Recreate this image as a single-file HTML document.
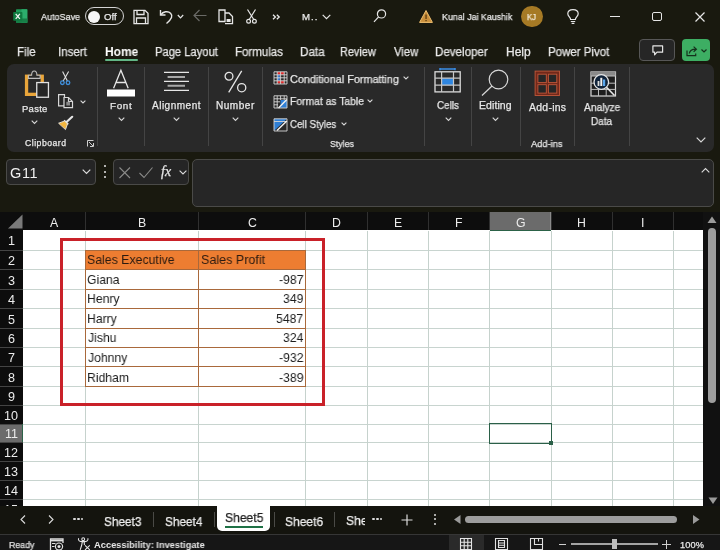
<!DOCTYPE html>
<html><head><meta charset="utf-8"><style>
html,body{margin:0;padding:0;width:720px;height:550px;overflow:hidden;background:#19190f;}
body{position:relative;font-family:"Liberation Sans",sans-serif;}
.t{position:absolute;white-space:nowrap;line-height:20px;height:20px;-webkit-text-stroke:0.25px currentColor;will-change:transform;}
.r{position:absolute;box-sizing:border-box;}
svg.r{overflow:visible}
</style></head><body>
<!-- title bar -->
<svg class="r" style="left:13px;top:8.5px" width="15" height="14" viewBox="0 0 15 14">
  <rect x="3" y="0.3" width="11.3" height="13.5" rx="0.8" fill="#1f9a5a"/>
  <rect x="8.5" y="0.3" width="5.8" height="13.5" fill="#2cae6c"/>
  <rect x="3" y="9.5" width="11.3" height="4.3" fill="#177f47"/>
  <rect x="0.2" y="2.9" width="9.2" height="8.8" rx="0.8" fill="#107a40"/>
  <path d="M2.7 4.8 L6.9 9.8 M6.9 4.8 L2.7 9.8" stroke="#f0f0f0" stroke-width="1.3"/>
</svg>
<div class="r" style="left:85px;top:7.2px;width:38.8px;height:17.5px;border:1.5px solid #d4d4d4;border-radius:9px;"></div>
<div class="r" style="left:87.8px;top:10.6px;width:12.3px;height:12.3px;border-radius:50%;background:#f6f6f6;"></div>
<!-- save -->
<svg class="r" style="left:133px;top:8.5px" width="16" height="16" viewBox="0 0 16 16" fill="none" stroke="#e6e6e6" stroke-width="1.3">
  <path d="M1 1.3 H12 L15 4.3 V14.7 H1 Z"/>
  <path d="M4 1.3 V5.5 H11 V1.3"/>
  <path d="M3.5 14.7 V9 H12.5 V14.7"/>
</svg>
<!-- undo -->
<svg class="r" style="left:159px;top:8.5px" width="16" height="16" viewBox="0 0 16 16" fill="none" stroke="#e6e6e6" stroke-width="1.4">
  <path d="M1.5 1 V6 H6.5"/>
  <path d="M1.8 5.8 C4 2.5 9 1.6 11.6 4.2 C14 6.6 13 10 7.5 14.5"/>
</svg>
<svg class="r" style="left:177px;top:13.5px" width="7" height="5" fill="none" stroke="#e6e6e6" stroke-width="1.2"><path d="M0.8 1 L3.5 3.8 L6.2 1"/></svg>
<!-- back arrow dim -->
<svg class="r" style="left:192.5px;top:9px" width="14" height="13" fill="none" stroke="#6a6a66" stroke-width="1.2"><path d="M13.5 6.5 H1 M6.5 1 L1 6.5 L6.5 12"/></svg>
<!-- copy-like icon -->
<svg class="r" style="left:218px;top:8.5px" width="16" height="16" viewBox="0 0 16 16" fill="none" stroke="#e6e6e6" stroke-width="1.3">
  <path d="M1 1 H7 V12.5 H1 Z"/>
  <path d="M7 4 H11 L14.5 7.5 V14.7 H7"/>
  <rect x="8.6" y="10" width="4" height="3" fill="#e6e6e6" stroke="none"/>
</svg>
<!-- scissors -->
<svg class="r" style="left:245.5px;top:9px" width="11" height="15" viewBox="0 0 11 15" fill="none" stroke="#e6e6e6" stroke-width="1.2">
  <path d="M1.5 0.5 L7.6 10.2 M9.5 0.5 L3.4 10.2"/>
  <circle cx="2.6" cy="12.2" r="1.9"/><circle cx="8.4" cy="12.2" r="1.9"/>
</svg>
<svg class="r" style="left:321.5px;top:13.5px" width="9" height="6" fill="none" stroke="#e6e6e6" stroke-width="1.2"><path d="M0.7 0.8 L4.5 4.6 L8.3 0.8"/></svg>
<!-- search -->
<svg class="r" style="left:373px;top:9px" width="14" height="14" fill="none" stroke="#e6e6e6" stroke-width="1.2"><circle cx="8.5" cy="4.9" r="4.1"/><path d="M5.6 7.8 L1 12.8"/></svg>
<!-- warning -->
<svg class="r" style="left:419px;top:9.5px" width="14" height="13" viewBox="0 0 14 13">
  <path d="M7 0.5 L13.4 12.4 H0.6 Z" fill="#c98f3c" stroke="#f0c070" stroke-width="1" stroke-linejoin="round"/>
  <rect x="6.4" y="4.5" width="1.3" height="4.5" fill="#5a3a10"/><rect x="6.4" y="10" width="1.3" height="1.2" fill="#5a3a10"/>
</svg>
<div class="r" style="left:521.3px;top:5.8px;width:21.5px;height:21.5px;border-radius:50%;background:#a67a25;"></div>
<!-- lightbulb -->
<svg class="r" style="left:567px;top:8.5px" width="12" height="15" viewBox="0 0 12 15" fill="none" stroke="#e6e6e6" stroke-width="1.2">
  <path d="M3.6 10.5 C3.6 8.5 0.8 7.3 0.8 4.8 C0.8 2.2 3 0.6 6 0.6 C9 0.6 11.2 2.2 11.2 4.8 C11.2 7.3 8.4 8.5 8.4 10.5 Z"/>
  <path d="M3.8 12.5 H8.2 M4.6 14.3 H7.4"/>
</svg>
<!-- window controls -->
<div class="r" style="left:610px;top:15.5px;width:10px;height:1.2px;background:#e6e6e6;"></div>
<div class="r" style="left:652.3px;top:11.6px;width:9.8px;height:9.4px;border:1.2px solid #e6e6e6;border-radius:2px;"></div>
<svg class="r" style="left:695px;top:11.5px" width="10" height="10" fill="none" stroke="#e6e6e6" stroke-width="1.2"><path d="M0.5 0.5 L9.5 9.5 M9.5 0.5 L0.5 9.5"/></svg>

<!-- tabs -->
<div class="r" style="left:105px;top:58.8px;width:32.5px;height:2.2px;background:#62b686;border-radius:1px;"></div>
<div class="r" style="left:638.5px;top:39.3px;width:36.5px;height:21.6px;border:1.1px solid #575757;border-radius:4px;background:#262626;"></div>
<svg class="r" style="left:651.5px;top:44.5px" width="12" height="11" fill="none" stroke="#e6e6e6" stroke-width="1.2"><path d="M0.9 0.9 H10.6 V7.2 H5 L2.6 9.8 V7.2 H0.9 Z" stroke-linejoin="round"/></svg>
<div class="r" style="left:682px;top:39.3px;width:28px;height:21.6px;border-radius:4px;background:#3dae63;"></div>
<svg class="r" style="left:685.5px;top:44.5px" width="12" height="12" fill="none" stroke="#15301c" stroke-width="1.2"><path d="M1 5.5 V10.7 H9.7 V8.6"/><path d="M3.3 8.5 C3.8 5.6 5.6 4.2 9.6 4.2 M7.6 1.6 L10.4 4.2 L7.6 6.8"/></svg>
<svg class="r" style="left:701px;top:48.8px" width="6" height="4" fill="none" stroke="#15301c" stroke-width="1.2"><path d="M0.5 0.5 L3 3 L5.5 0.5"/></svg>
<svg class="r" style="left:272px;top:13.5px" width="9" height="6" fill="none" stroke="#ececec" stroke-width="1.3"><path d="M1 0.8 L3.4 3 L1 5.2 M4.8 0.8 L7.2 3 L4.8 5.2"/></svg>

<!-- ribbon panel -->
<div class="r" style="left:6.5px;top:63.6px;width:707px;height:88px;background:#292929;border-radius:7px;"></div>
<!-- separators -->
<div class="r" style="left:97px;top:67px;width:1px;height:79px;background:#444;"></div>
<div class="r" style="left:144.3px;top:67px;width:1px;height:79px;background:#444;"></div>
<div class="r" style="left:208px;top:67px;width:1px;height:79px;background:#444;"></div>
<div class="r" style="left:262.3px;top:67px;width:1px;height:79px;background:#444;"></div>
<div class="r" style="left:423.5px;top:67px;width:1px;height:79px;background:#444;"></div>
<div class="r" style="left:471.3px;top:67px;width:1px;height:79px;background:#444;"></div>
<div class="r" style="left:519.5px;top:67px;width:1px;height:79px;background:#444;"></div>
<div class="r" style="left:574.3px;top:67px;width:1px;height:79px;background:#444;"></div>
<div class="r" style="left:628.7px;top:67px;width:1px;height:79px;background:#444;"></div>

<!-- Clipboard: paste icon -->
<svg class="r" style="left:24px;top:70px" width="27" height="29" viewBox="0 0 27 29" fill="none">
  <rect x="2.55" y="6.25" width="15.7" height="18.1" stroke="#e9a53a" stroke-width="3.3"/>
  <path d="M4.4 8.4 V5.3 H7.6 C7.6 2.3 8.6 1 10.25 1 C11.9 1 12.9 2.3 12.9 5.3 H16.1 V8.4 Z" fill="#2a2a2a" stroke="#bdbdbd" stroke-width="1.1"/>
  <rect x="12.75" y="12.55" width="11.7" height="14.7" fill="#262626" stroke="#e0e0e0" stroke-width="1.3"/>
</svg>
<svg class="r" style="left:31px;top:120px" width="7" height="5" fill="none" stroke="#d8d8d8" stroke-width="1.1"><path d="M0.7 0.7 L3.5 3.5 L6.3 0.7"/></svg>
<!-- scissors -->
<svg class="r" style="left:58px;top:70px" width="14" height="16" viewBox="0 0 14 16" fill="none">
  <path d="M4.6 1.6 L9.4 11 M10.6 1.6 L5.2 11" stroke="#e0e0e0" stroke-width="1.1"/>
  <circle cx="4.4" cy="12.7" r="1.8" stroke="#3f8fdc" stroke-width="1.3"/><circle cx="10" cy="12.7" r="1.8" stroke="#3f8fdc" stroke-width="1.3"/>
</svg>
<!-- copy -->
<svg class="r" style="left:57px;top:93px" width="18" height="16" viewBox="0 0 18 16" fill="none" stroke="#d8d8d8" stroke-width="1.2">
  <path d="M1.6 1.6 H7.5 V12.8 H1.6 Z"/>
  <path d="M7 4.5 H11.5 L15.5 8.5 V14.7 H7 Z" fill="#262626"/>
  <path d="M11.5 4.5 V8.5 H15.5"/>
  <rect x="9.3" y="8.8" width="3.7" height="3.7" fill="#8a8a8a" stroke="none"/>
</svg>
<svg class="r" style="left:79.5px;top:99.5px" width="6" height="4" fill="none" stroke="#d8d8d8" stroke-width="1.1"><path d="M0.6 0.6 L3 3 L5.4 0.6"/></svg>
<!-- format painter -->
<svg class="r" style="left:57px;top:115px" width="17" height="16" viewBox="0 0 17 16" fill="none">
  <path d="M9.5 7 L15.2 1.8" stroke="#e6e6e6" stroke-width="2.2" stroke-linecap="round"/>
  <path d="M7.2 5.2 L11.3 9.3" stroke="#e6e6e6" stroke-width="1.4"/>
  <path d="M7.6 6 L10.5 8.9 L8.5 14.6 L1.6 8.2 Z" fill="#f2b640" stroke="#e6e6e6" stroke-width="0.9"/>
  <path d="M4.5 10.6 L8.5 14.6 L1.6 8.2 Z" fill="#c98a2a"/>
</svg>
<svg class="r" style="left:87px;top:140px" width="7" height="7" fill="none" stroke="#d0d0d0" stroke-width="1"><path d="M0.5 6.5 V0.5 H6.5 M2 2 L6 6 M3 6.5 H6.5 V3"/></svg>

<!-- Font -->
<svg class="r" style="left:107px;top:69.5px" width="28" height="27" viewBox="0 0 28 27" fill="none">
  <path d="M6.6 18.3 L13.9 0.3 L21.2 18.3 M9.3 12.5 H18.5" stroke="#e6e6e6" stroke-width="1.3"/>
  <rect x="0" y="19.5" width="28" height="7" fill="#ffffff"/>
</svg>
<svg class="r" style="left:117.5px;top:117px" width="7" height="5" fill="none" stroke="#d8d8d8" stroke-width="1.1"><path d="M0.7 0.7 L3.5 3.5 L6.3 0.7"/></svg>

<!-- Alignment -->
<svg class="r" style="left:163px;top:70px" width="28" height="23" fill="none">
  <path d="M1 2.4 H26 M1 11.3 H26 M1 20.3 H26" stroke="#e6e6e6" stroke-width="1.3"/>
  <path d="M4.6 7 H22 M4.6 15.8 H22" stroke="#a8a8a8" stroke-width="2"/>
</svg>
<svg class="r" style="left:172.5px;top:117px" width="7" height="5" fill="none" stroke="#d8d8d8" stroke-width="1.1"><path d="M0.7 0.7 L3.5 3.5 L6.3 0.7"/></svg>

<!-- Number -->
<svg class="r" style="left:222px;top:69px" width="26" height="26" fill="none" stroke="#e6e6e6" stroke-width="1.3">
  <circle cx="7" cy="7.2" r="3.9"/><circle cx="19.7" cy="18.7" r="4.1"/><path d="M19.7 1.9 L6.7 23.3"/>
</svg>
<svg class="r" style="left:231.5px;top:117px" width="7" height="5" fill="none" stroke="#d8d8d8" stroke-width="1.1"><path d="M0.7 0.7 L3.5 3.5 L6.3 0.7"/></svg>

<!-- Styles -->
<svg class="r" style="left:272.5px;top:71px" width="15" height="14" viewBox="0 0 15 14" fill="none">
  <rect x="4.2" y="1" width="7" height="2.6" fill="#e02828"/>
  <rect x="4.2" y="9.8" width="7" height="2.6" fill="#e02828"/>
  <rect x="4.2" y="3.8" width="2.6" height="5.8" fill="#3a7fd6"/>
  <path d="M1 0.8 H14 V13 H1 Z M1 3.8 H14 M1 6.8 H14 M1 9.8 H14 M4.2 0.8 V13 M7.6 0.8 V13 M11.2 0.8 V13" stroke="#d6d6d6" stroke-width="0.9"/>
</svg>
<svg class="r" style="left:402.5px;top:75.5px" width="6" height="4" fill="none" stroke="#d8d8d8" stroke-width="1.1"><path d="M0.6 0.6 L3 3 L5.4 0.6"/></svg>
<svg class="r" style="left:272.5px;top:94.5px" width="15" height="14" viewBox="0 0 15 14" fill="none">
  <path d="M6.5 12.8 L14 5 V12.8 Z" fill="#2f7fd6"/>
  <rect x="7.5" y="5" width="6.5" height="7.8" fill="#2f7fd6"/>
  <path d="M1 0.8 H14 V13 H1 Z M1 3.8 H14 M1 6.8 H7 M1 9.8 H5 M4.2 0.8 V13 M7.6 0.8 V5 M11.2 0.8 V5" stroke="#d6d6d6" stroke-width="0.9"/>
  <path d="M5.5 13 L13.8 4.5" stroke="#f2f2f2" stroke-width="1.4"/>
</svg>
<svg class="r" style="left:367px;top:98.5px" width="6" height="4" fill="none" stroke="#d8d8d8" stroke-width="1.1"><path d="M0.6 0.6 L3 3 L5.4 0.6"/></svg>
<svg class="r" style="left:272.5px;top:117.5px" width="15" height="14" viewBox="0 0 15 14" fill="none">
  <path d="M1 0.8 H14 L1 13 Z" fill="#2f7fd6"/>
  <path d="M1 0.8 H14 V13 H1 Z M1 3.5 H14" stroke="#d6d6d6" stroke-width="0.9"/>
  <path d="M4 12.5 L13.8 3" stroke="#f2f2f2" stroke-width="1.4"/>
</svg>
<svg class="r" style="left:340.5px;top:121.5px" width="6" height="4" fill="none" stroke="#d8d8d8" stroke-width="1.1"><path d="M0.6 0.6 L3 3 L5.4 0.6"/></svg>

<!-- Cells -->
<svg class="r" style="left:434px;top:67px" width="27" height="26" viewBox="0 0 27 26" fill="none">
  <path d="M6 2.1 H21 M6 1 V3.2 M21 1 V3.2" stroke="#3a8ee6" stroke-width="1.5"/>
  <rect x="7.6" y="11.2" width="11.9" height="7" fill="#2f86e0"/>
  <rect x="1" y="4.8" width="25.2" height="20.1" stroke="#dcdcdc" stroke-width="1.3"/>
  <path d="M1 11.2 H26.2 M1 18.2 H26.2 M7.6 4.8 V24.9 M19.5 4.8 V24.9" stroke="#c8c8c8" stroke-width="1.2"/>
</svg>
<svg class="r" style="left:444.5px;top:117px" width="7" height="5" fill="none" stroke="#d8d8d8" stroke-width="1.1"><path d="M0.7 0.7 L3.5 3.5 L6.3 0.7"/></svg>

<!-- Editing -->
<svg class="r" style="left:481px;top:68.5px" width="28" height="27" fill="none" stroke="#d8d8d8" stroke-width="1.2">
  <circle cx="17.5" cy="10.5" r="9.3"/><path d="M11 17 L1 26.5"/>
</svg>
<svg class="r" style="left:491.5px;top:117px" width="7" height="5" fill="none" stroke="#d8d8d8" stroke-width="1.1"><path d="M0.7 0.7 L3.5 3.5 L6.3 0.7"/></svg>

<!-- Add-ins -->
<svg class="r" style="left:534px;top:70px" width="27" height="27" viewBox="0 0 27 27">
  <rect x="1.1" y="1.1" width="24.4" height="24.4" fill="#72281a" stroke="#c0583a" stroke-width="0.9"/>
  <rect x="3.9" y="4.2" width="8.4" height="8.4" fill="#262626" stroke="#c0583a" stroke-width="0.9"/>
  <rect x="14.4" y="4.2" width="8.4" height="8.4" fill="#262626" stroke="#c0583a" stroke-width="0.9"/>
  <rect x="3.9" y="14.7" width="8.4" height="8.4" fill="#262626" stroke="#c0583a" stroke-width="0.9"/>
  <rect x="14.4" y="14.7" width="8.4" height="8.4" fill="#262626" stroke="#c0583a" stroke-width="0.9"/>
</svg>

<!-- Analyze Data -->
<svg class="r" style="left:589.5px;top:70.5px" width="27" height="27" viewBox="0 0 27 27" fill="none">
  <rect x="1" y="1" width="24.5" height="24" fill="#1e1e1e" stroke="#d8d8d8" stroke-width="1.2"/>
  <rect x="1" y="1" width="24.5" height="4" fill="#8a8a8a"/>
  <path d="M1 5 H25.5 M1 12.2 H25.5 M1 18.4 H25.5 M8.5 5 V25 M16.2 5 V25" stroke="#bdbdbd" stroke-width="1"/>
  <circle cx="11.3" cy="11" r="7.3" fill="#10233a" stroke="#e6e6e6" stroke-width="1.3"/>
  <path d="M16.5 16.3 L24.5 24.5" stroke="#e6e6e6" stroke-width="1.6"/>
  <rect x="7.6" y="10" width="1.8" height="5" fill="#dcdcdc"/><rect x="10.3" y="6.8" width="2" height="8.2" fill="#f0f0f0"/><rect x="13" y="8.5" width="2.2" height="6.5" fill="#5aa8ee"/>
</svg>
<svg class="r" style="left:695.5px;top:137px" width="10" height="6" fill="none" stroke="#d8d8d8" stroke-width="1.2"><path d="M0.7 0.7 L5 5 L9.3 0.7"/></svg>

<!-- formula bar -->
<div class="r" style="left:6px;top:159.2px;width:90px;height:25.5px;border:1px solid #4a4a48;border-radius:4px;background:#252525;"></div>
<svg class="r" style="left:82px;top:169px" width="9" height="6" fill="none" stroke="#dcdcdc" stroke-width="1.2"><path d="M0.7 0.7 L4.5 4.5 L8.3 0.7"/></svg>
<div class="r" style="left:103.5px;top:165px;width:2px;height:2px;background:#e6e6e6;border-radius:1px;"></div>
<div class="r" style="left:103.5px;top:170.5px;width:2px;height:2px;background:#e6e6e6;border-radius:1px;"></div>
<div class="r" style="left:103.5px;top:176px;width:2px;height:2px;background:#e6e6e6;border-radius:1px;"></div>
<div class="r" style="left:113.3px;top:159.2px;width:75.6px;height:25.5px;border:1px solid #4a4a48;border-radius:4px;background:#252525;"></div>
<svg class="r" style="left:119px;top:166.5px" width="12" height="12" fill="none" stroke="#8a8a88" stroke-width="1.1"><path d="M0.5 0.5 L11 11 M11 0.5 L0.5 11"/></svg>
<svg class="r" style="left:139px;top:166.5px" width="14" height="11" fill="none" stroke="#8a8a88" stroke-width="1.1"><path d="M0.5 6 L5 10.5 L13.5 0.5"/></svg>
<svg class="r" style="left:179px;top:169.5px" width="8" height="5" fill="none" stroke="#dcdcdc" stroke-width="1.1"><path d="M0.6 0.6 L4 4 L7.4 0.6"/></svg>
<div class="r" style="left:192px;top:159.2px;width:522px;height:47.5px;border:1px solid #4a4a48;border-radius:5px;background:#262626;"></div>
<svg class="r" style="left:700.5px;top:167px" width="9" height="6" fill="none" stroke="#dcdcdc" stroke-width="1.1"><path d="M0.7 5.3 L4.5 1.5 L8.3 5.3"/></svg>
<div style="position:absolute;left:158px;top:162px;width:20px;height:22px;"><div class="t" style="left:2.5px;top:0px;font-size:14px;color:#e6e6e6;font-family:'Liberation Serif',serif;font-style:italic;">fx</div></div>

<div style="position:absolute;left:0;top:0;width:720px;height:505.9px;overflow:hidden"><div class="r" style="left:0px;top:211.9px;width:720px;height:294.0px;background:#0d0d0d;"></div>
<div class="r" style="left:23.4px;top:230.4px;width:679.3000000000001px;height:275.5px;background:#ffffff;"></div>
<div class="r" style="left:23.4px;top:249.6px;width:679.3000000000001px;height:1px;background:#c8d4cf;"></div>
<div class="r" style="left:23.4px;top:269.0px;width:679.3000000000001px;height:1px;background:#c8d4cf;"></div>
<div class="r" style="left:23.4px;top:288.7px;width:679.3000000000001px;height:1px;background:#c8d4cf;"></div>
<div class="r" style="left:23.4px;top:307.9px;width:679.3000000000001px;height:1px;background:#c8d4cf;"></div>
<div class="r" style="left:23.4px;top:327.8px;width:679.3000000000001px;height:1px;background:#c8d4cf;"></div>
<div class="r" style="left:23.4px;top:346.9px;width:679.3000000000001px;height:1px;background:#c8d4cf;"></div>
<div class="r" style="left:23.4px;top:366.1px;width:679.3000000000001px;height:1px;background:#c8d4cf;"></div>
<div class="r" style="left:23.4px;top:386.0px;width:679.3000000000001px;height:1px;background:#c8d4cf;"></div>
<div class="r" style="left:23.4px;top:404.7px;width:679.3000000000001px;height:1px;background:#c8d4cf;"></div>
<div class="r" style="left:23.4px;top:423.8px;width:679.3000000000001px;height:1px;background:#c8d4cf;"></div>
<div class="r" style="left:23.4px;top:442.3px;width:679.3000000000001px;height:1px;background:#c8d4cf;"></div>
<div class="r" style="left:23.4px;top:460.7px;width:679.3000000000001px;height:1px;background:#c8d4cf;"></div>
<div class="r" style="left:23.4px;top:479.9px;width:679.3000000000001px;height:1px;background:#c8d4cf;"></div>
<div class="r" style="left:23.4px;top:499.0px;width:679.3000000000001px;height:1px;background:#c8d4cf;"></div>
<div class="r" style="left:85.2px;top:230.8px;width:1px;height:275.09999999999997px;background:#c6d2cd;"></div>
<div class="r" style="left:198.1px;top:230.8px;width:1px;height:275.09999999999997px;background:#c6d2cd;"></div>
<div class="r" style="left:305.3px;top:230.8px;width:1px;height:275.09999999999997px;background:#c6d2cd;"></div>
<div class="r" style="left:367.0px;top:230.8px;width:1px;height:275.09999999999997px;background:#c6d2cd;"></div>
<div class="r" style="left:428.1px;top:230.8px;width:1px;height:275.09999999999997px;background:#c6d2cd;"></div>
<div class="r" style="left:489.0px;top:230.8px;width:1px;height:275.09999999999997px;background:#c6d2cd;"></div>
<div class="r" style="left:550.9px;top:230.8px;width:1px;height:275.09999999999997px;background:#c6d2cd;"></div>
<div class="r" style="left:612.0px;top:230.8px;width:1px;height:275.09999999999997px;background:#c6d2cd;"></div>
<div class="r" style="left:673.2px;top:230.8px;width:1px;height:275.09999999999997px;background:#c6d2cd;"></div>
<div class="r" style="left:85.2px;top:211.9px;width:1px;height:18.5px;background:#303030;"></div>
<div class="r" style="left:198.1px;top:211.9px;width:1px;height:18.5px;background:#303030;"></div>
<div class="r" style="left:305.3px;top:211.9px;width:1px;height:18.5px;background:#303030;"></div>
<div class="r" style="left:367.0px;top:211.9px;width:1px;height:18.5px;background:#303030;"></div>
<div class="r" style="left:428.1px;top:211.9px;width:1px;height:18.5px;background:#303030;"></div>
<div class="r" style="left:490.0px;top:211.9px;width:60.89999999999998px;height:18.5px;background:#6b6b6b;"></div>
<div class="r" style="left:489.5px;top:229.6px;width:61.89999999999998px;height:1px;background:#2c6248;"></div>
<div class="r" style="left:550.4px;top:211.9px;width:1px;height:18px;background:#8a8a8a;"></div>
<div class="r" style="left:489.0px;top:211.9px;width:1px;height:18.5px;background:#303030;"></div>
<div class="r" style="left:550.9px;top:211.9px;width:1px;height:18.5px;background:#303030;"></div>
<div class="r" style="left:612.0px;top:211.9px;width:1px;height:18.5px;background:#303030;"></div>
<div class="r" style="left:673.2px;top:211.9px;width:1px;height:18.5px;background:#303030;"></div>
<div class="r" style="left:702.7px;top:211.9px;width:1px;height:18.5px;background:#303030;"></div>
<svg class="r" style="left:7px;top:214px" width="16" height="15"><polygon points="15.5,0.5 15.5,14.5 1,14.5" fill="#7a7a7a"/></svg>
<div class="r" style="left:0px;top:249.6px;width:23.4px;height:1px;background:#444444;"></div>
<div class="r" style="left:0px;top:269.0px;width:23.4px;height:1px;background:#444444;"></div>
<div class="r" style="left:0px;top:288.7px;width:23.4px;height:1px;background:#444444;"></div>
<div class="r" style="left:0px;top:307.9px;width:23.4px;height:1px;background:#444444;"></div>
<div class="r" style="left:0px;top:327.8px;width:23.4px;height:1px;background:#444444;"></div>
<div class="r" style="left:0px;top:346.9px;width:23.4px;height:1px;background:#444444;"></div>
<div class="r" style="left:0px;top:366.1px;width:23.4px;height:1px;background:#444444;"></div>
<div class="r" style="left:0px;top:386.0px;width:23.4px;height:1px;background:#444444;"></div>
<div class="r" style="left:0px;top:404.7px;width:23.4px;height:1px;background:#444444;"></div>
<div class="r" style="left:0px;top:423.8px;width:23.4px;height:1px;background:#444444;"></div>
<div class="r" style="left:0px;top:424.8px;width:23.4px;height:17.5px;background:#6b6b6b;"></div>
<div class="r" style="left:22.4px;top:424.3px;width:1px;height:18.5px;background:#2c6248;"></div>
<div class="r" style="left:0px;top:442.3px;width:23.4px;height:1px;background:#444444;"></div>
<div class="r" style="left:0px;top:460.7px;width:23.4px;height:1px;background:#444444;"></div>
<div class="r" style="left:0px;top:479.9px;width:23.4px;height:1px;background:#444444;"></div>
<div class="r" style="left:0px;top:499.0px;width:23.4px;height:1px;background:#444444;"></div>
<div class="r" style="left:0px;top:518.2px;width:23.4px;height:1px;background:#444444;"></div>
<div class="r" style="left:85.7px;top:250.1px;width:220.10000000000002px;height:19.4px;background:#ed7d31;"></div>
<div class="r" style="left:85.1px;top:249.5px;width:221.3px;height:1.2px;background:#a9693b;"></div>
<div class="r" style="left:85.1px;top:268.9px;width:221.3px;height:1.2px;background:#a9693b;"></div>
<div class="r" style="left:85.1px;top:288.6px;width:221.3px;height:1.2px;background:#a9693b;"></div>
<div class="r" style="left:85.1px;top:307.8px;width:221.3px;height:1.2px;background:#a9693b;"></div>
<div class="r" style="left:85.1px;top:327.7px;width:221.3px;height:1.2px;background:#a9693b;"></div>
<div class="r" style="left:85.1px;top:346.8px;width:221.3px;height:1.2px;background:#a9693b;"></div>
<div class="r" style="left:85.1px;top:366.0px;width:221.3px;height:1.2px;background:#a9693b;"></div>
<div class="r" style="left:85.1px;top:385.9px;width:221.3px;height:1.2px;background:#a9693b;"></div>
<div class="r" style="left:85.1px;top:249.5px;width:1.2px;height:137.6px;background:#a9693b;"></div>
<div class="r" style="left:198.0px;top:249.5px;width:1.2px;height:137.6px;background:#a9693b;"></div>
<div class="r" style="left:305.2px;top:249.5px;width:1.2px;height:137.6px;background:#a9693b;"></div>
<div class="t" style="left:50.43px;top:212.54px;font-size:12.29px;color:#ececec;-webkit-text-stroke:0;">A</div>
<div class="t" style="left:137.85px;top:212.54px;font-size:12.29px;color:#ececec;-webkit-text-stroke:0;">B</div>
<div class="t" style="left:247.65px;top:212.54px;font-size:12.29px;color:#ececec;-webkit-text-stroke:0;">C</div>
<div class="t" style="left:331.98px;top:212.54px;font-size:12.29px;color:#ececec;-webkit-text-stroke:0;">D</div>
<div class="t" style="left:393.69px;top:212.54px;font-size:12.29px;color:#ececec;-webkit-text-stroke:0;">E</div>
<div class="t" style="left:454.99px;top:212.54px;font-size:12.29px;color:#ececec;-webkit-text-stroke:0;">F</div>
<div class="t" style="left:515.78px;top:212.54px;font-size:12.29px;color:#ececec;-webkit-text-stroke:0;">G</div>
<div class="t" style="left:577.46px;top:212.54px;font-size:12.29px;color:#ececec;-webkit-text-stroke:0;">H</div>
<div class="t" style="left:641.38px;top:212.54px;font-size:12.29px;color:#ececec;-webkit-text-stroke:0;">I</div>
<div class="t" style="left:7.75px;top:231.44px;font-size:12.57px;color:#ececec;-webkit-text-stroke:0;">1</div>
<div class="t" style="left:7.88px;top:250.84px;font-size:12.57px;color:#ececec;-webkit-text-stroke:0;">2</div>
<div class="t" style="left:7.94px;top:270.54px;font-size:12.57px;color:#ececec;-webkit-text-stroke:0;">3</div>
<div class="t" style="left:7.94px;top:289.74px;font-size:12.57px;color:#ececec;-webkit-text-stroke:0;">4</div>
<div class="t" style="left:7.88px;top:309.64px;font-size:12.57px;color:#ececec;-webkit-text-stroke:0;">5</div>
<div class="t" style="left:7.82px;top:328.74px;font-size:12.57px;color:#ececec;-webkit-text-stroke:0;">6</div>
<div class="t" style="left:7.88px;top:347.94px;font-size:12.57px;color:#ececec;-webkit-text-stroke:0;">7</div>
<div class="t" style="left:7.88px;top:367.84px;font-size:12.57px;color:#ececec;-webkit-text-stroke:0;">8</div>
<div class="t" style="left:7.94px;top:386.54px;font-size:12.57px;color:#ececec;-webkit-text-stroke:0;">9</div>
<div class="t" style="left:4.20px;top:405.64px;font-size:12.57px;color:#ececec;-webkit-text-stroke:0;">10</div>
<div class="t" style="left:4.73px;top:424.14px;font-size:12.57px;color:#ececec;-webkit-text-stroke:0;">11</div>
<div class="t" style="left:4.26px;top:442.54px;font-size:12.57px;color:#ececec;-webkit-text-stroke:0;">12</div>
<div class="t" style="left:4.20px;top:461.74px;font-size:12.57px;color:#ececec;-webkit-text-stroke:0;">13</div>
<div class="t" style="left:4.13px;top:480.84px;font-size:12.57px;color:#ececec;-webkit-text-stroke:0;">14</div>
<div class="t" style="left:4.20px;top:500.04px;font-size:12.57px;color:#ececec;-webkit-text-stroke:0;">15</div>
<div class="t" style="left:87.31px;top:250.46px;font-size:13.69px;color:#2a1a10;transform:scaleX(0.899);transform-origin:0 0;-webkit-text-stroke:0;">Sales Executive</div>
<div class="t" style="left:200.80px;top:250.46px;font-size:13.69px;color:#2a1a10;transform:scaleX(0.916);transform-origin:0 0;-webkit-text-stroke:0;">Sales Profit</div>
<div class="t" style="left:87.19px;top:270.25px;font-size:13.41px;color:#1c1c1c;transform:scaleX(0.910);transform-origin:0 0;-webkit-text-stroke:0;">Giana</div>
<div class="t" style="left:278.94px;top:270.25px;font-size:13.41px;color:#1c1c1c;transform:scaleX(0.910);transform-origin:0 0;-webkit-text-stroke:0;">-987</div>
<div class="t" style="left:86.82px;top:289.45px;font-size:13.41px;color:#1c1c1c;transform:scaleX(0.910);transform-origin:0 0;-webkit-text-stroke:0;">Henry</div>
<div class="t" style="left:283.01px;top:289.45px;font-size:13.41px;color:#1c1c1c;transform:scaleX(0.910);transform-origin:0 0;-webkit-text-stroke:0;">349</div>
<div class="t" style="left:86.82px;top:309.35px;font-size:13.41px;color:#1c1c1c;transform:scaleX(0.910);transform-origin:0 0;-webkit-text-stroke:0;">Harry</div>
<div class="t" style="left:276.22px;top:309.35px;font-size:13.41px;color:#1c1c1c;transform:scaleX(0.910);transform-origin:0 0;-webkit-text-stroke:0;">5487</div>
<div class="t" style="left:87.68px;top:328.45px;font-size:13.41px;color:#1c1c1c;transform:scaleX(0.910);transform-origin:0 0;-webkit-text-stroke:0;">Jishu</div>
<div class="t" style="left:282.76px;top:328.45px;font-size:13.41px;color:#1c1c1c;transform:scaleX(0.910);transform-origin:0 0;-webkit-text-stroke:0;">324</div>
<div class="t" style="left:87.68px;top:347.65px;font-size:13.41px;color:#1c1c1c;transform:scaleX(0.910);transform-origin:0 0;-webkit-text-stroke:0;">Johnny</div>
<div class="t" style="left:278.94px;top:347.65px;font-size:13.41px;color:#1c1c1c;transform:scaleX(0.910);transform-origin:0 0;-webkit-text-stroke:0;">-932</div>
<div class="t" style="left:86.82px;top:367.55px;font-size:13.41px;color:#1c1c1c;transform:scaleX(0.910);transform-origin:0 0;-webkit-text-stroke:0;">Ridham</div>
<div class="t" style="left:278.94px;top:367.55px;font-size:13.41px;color:#1c1c1c;transform:scaleX(0.910);transform-origin:0 0;-webkit-text-stroke:0;">-389</div>
<div class="r" style="left:59.8px;top:238.3px;width:264.8px;height:168px;border:3.1px solid #c92129"></div>
<div class="r" style="left:489.1px;top:422.8px;width:62.9px;height:20.9px;border:1.3px solid #2b6048"></div>
<div class="r" style="left:548.9px;top:440.8px;width:4.2px;height:4px;background:#2b6048;"></div>
<div class="r" style="left:702.7px;top:211.9px;width:17.299999999999955px;height:294.0px;background:#111111;"></div>
<svg class="r" style="left:707px;top:216px" width="10" height="8"><polygon points="5,0.5 9.5,7 0.5,7" fill="#9a9a9a"/></svg>
<div class="r" style="left:708px;top:227.6px;width:7.6px;height:175.7px;background:#9d9d9d;border-radius:4px;"></div>
<svg class="r" style="left:707.5px;top:496.5px" width="10" height="8"><polygon points="0.5,0.5 9.5,0.5 5,7" fill="#9a9a9a"/></svg></div>
<!-- sheet tab bar -->
<div class="r" style="left:0;top:505.9px;width:720px;height:28.3px;background:#14140e;"></div>
<!-- white tab connecting to grid -->
<div class="r" style="left:217.2px;top:505.9px;width:53px;height:25px;background:#ffffff;border-radius:0 0 5px 5px;"></div>
<!-- rounded corners of dark bar adjacent to tab -->
<svg class="r" style="left:211.2px;top:505.9px" width="6" height="6"><path d="M0 6 A6 6 0 0 0 6 0 V6 Z" fill="#14140e"/></svg>
<svg class="r" style="left:0;top:505.9px" width="0" height="0"></svg>
<svg class="r" style="left:270.2px;top:505.9px" width="6" height="6"><path d="M6 6 A6 6 0 0 1 0 0 V6 Z" fill="#14140e"/></svg>
<!-- nav -->
<svg class="r" style="left:19.5px;top:515px" width="6" height="9" fill="none" stroke="#dcdcdc" stroke-width="1.1"><path d="M5 0.5 L1 4.5 L5 8.5"/></svg>
<svg class="r" style="left:48px;top:515px" width="6" height="9" fill="none" stroke="#dcdcdc" stroke-width="1.1"><path d="M1 0.5 L5 4.5 L1 8.5"/></svg>
<div class="r" style="left:73.3px;top:517.8px;width:2.6px;height:2.6px;background:#dcdcdc;border-radius:50%;"></div>
<div class="r" style="left:77.1px;top:517.8px;width:2.6px;height:2.6px;background:#dcdcdc;border-radius:50%;"></div>
<div class="r" style="left:80.9px;top:517.8px;width:2.6px;height:2.6px;background:#dcdcdc;border-radius:50%;"></div>
<div class="r" style="left:152.5px;top:512px;width:1px;height:15px;background:#4a4a46;"></div>
<div class="r" style="left:213.5px;top:512px;width:1px;height:15px;background:#4a4a46;"></div>
<div class="r" style="left:224.8px;top:526.3px;width:38.2px;height:1.8px;background:#1e7145;"></div>
<div class="r" style="left:273.5px;top:512px;width:1px;height:15px;background:#4a4a46;"></div>
<div class="r" style="left:333.5px;top:512px;width:1px;height:15px;background:#4a4a46;"></div>
<div class="r" style="left:372.3px;top:517.8px;width:2.6px;height:2.6px;background:#dcdcdc;border-radius:50%;"></div>
<div class="r" style="left:376.1px;top:517.8px;width:2.6px;height:2.6px;background:#dcdcdc;border-radius:50%;"></div>
<div class="r" style="left:379.9px;top:517.8px;width:2.6px;height:2.6px;background:#dcdcdc;border-radius:50%;"></div>
<svg class="r" style="left:400.5px;top:513.5px" width="12" height="12" fill="none" stroke="#dcdcdc" stroke-width="1.2"><path d="M6 0.5 V11.5 M0.5 6 H11.5"/></svg>
<div class="r" style="left:434px;top:513.5px;width:2.2px;height:2.2px;background:#dcdcdc;border-radius:50%;"></div>
<div class="r" style="left:434px;top:518.3px;width:2.2px;height:2.2px;background:#dcdcdc;border-radius:50%;"></div>
<div class="r" style="left:434px;top:523.1px;width:2.2px;height:2.2px;background:#dcdcdc;border-radius:50%;"></div>
<svg class="r" style="left:453.5px;top:515px" width="7" height="9"><polygon points="6.5,0 6.5,9 0,4.5" fill="#9a9a9a"/></svg>
<div class="r" style="left:465px;top:515.5px;width:211.7px;height:7.5px;background:#9d9d9d;border-radius:4px;"></div>
<svg class="r" style="left:693px;top:515px" width="7" height="9"><polygon points="0,0 0,9 6.5,4.5" fill="#9a9a9a"/></svg>

<!-- status bar -->
<div class="r" style="left:0;top:534px;width:720px;height:1px;background:#363636;"></div>
<div class="r" style="left:0;top:535px;width:720px;height:15px;background:#161616;"></div>
<svg class="r" style="left:49px;top:538px" width="16" height="12" viewBox="0 0 16 12" fill="none" stroke="#e0e0e0">
  <path d="M1.5 12 V1 H14 V5" stroke-width="1.3"/>
  <path d="M1.5 2.6 H14" stroke-width="1.6"/>
  <path d="M3 5.5 H6.5 M3 8.5 H5.5" stroke-width="1.1"/>
  <circle cx="10" cy="8.6" r="3.6" fill="#161616" stroke-width="1.2"/>
  <circle cx="10" cy="8.6" r="1.5" fill="#e6e6e6" stroke="none"/>
</svg>
<svg class="r" style="left:76px;top:537px" width="16" height="13" viewBox="0 0 16 13" fill="none" stroke="#e6e6e6" stroke-width="1.1">
  <circle cx="7.2" cy="2.2" r="1.4"/>
  <path d="M2.6 1.2 C1.8 3.5 3.5 4.8 7.2 4.6 C10.9 4.8 12.6 3.5 11.8 1.2"/>
  <path d="M6.3 4.8 L5.6 8.5 L4.2 12.8 M8.2 4.8 L8.4 8"/>
  <path d="M9 8.4 L13.8 12.8 M13.8 8.4 L9 12.8"/>
</svg>
<div class="r" style="left:448.8px;top:535.2px;width:35px;height:14.8px;background:#2a2a2a;"></div>
<svg class="r" style="left:459.5px;top:537.5px" width="12" height="12" fill="none" stroke="#e6e6e6" stroke-width="1.1"><path d="M0.5 0.5 H11.5 V11.5 H0.5 Z M4.2 0.5 V11.5 M7.8 0.5 V11.5 M0.5 4.2 H11.5 M0.5 7.8 H11.5"/></svg>
<svg class="r" style="left:495px;top:537.5px" width="13" height="12" fill="none" stroke="#e0e0e0" stroke-width="1.1"><path d="M0.5 0.5 H12.5 V11.5 H0.5 Z"/><path d="M3.5 2.5 H9.5 V9.5 H3.5 Z M3.5 5 H9.5 M3.5 7.2 H9.5"/></svg>
<svg class="r" style="left:530px;top:537.5px" width="13" height="12" fill="none" stroke="#e0e0e0" stroke-width="1.1"><path d="M0.5 0.5 H12.5 V11.5 H0.5 Z M4.5 0.5 V6.5 H12.5"/><path d="M8.5 0.5 V3.5"/></svg>
<div class="r" style="left:558.5px;top:543.5px;width:7px;height:1px;background:#cfcfcf;"></div>
<div class="r" style="left:571.2px;top:543.1px;width:87px;height:1.7px;background:#a4a4a4;"></div>
<div class="r" style="left:612.2px;top:538.9px;width:4.5px;height:10px;background:#bdbdbd;"></div>
<svg class="r" style="left:662px;top:539.5px" width="9" height="9" fill="none" stroke="#cfcfcf" stroke-width="1"><path d="M4.5 0 V9 M0 4.5 H9"/></svg>
<div style="position:absolute;left:340px;top:506px;width:25px;height:26px;overflow:hidden;"><div class="t" style="left:5.8px;top:5.3px;font-size:13px;color:#f0f0f0;transform:scaleX(0.93);transform-origin:0 0;">Sheet6</div></div>

<div class="t" style="left:41.00px;top:6.96px;font-size:9.36px;color:#e8e8e8;transform:scaleX(0.964);transform-origin:0 0;">AutoSave</div>
<div class="t" style="left:104.31px;top:6.86px;font-size:9.64px;color:#e8e8e8;letter-spacing:0.044px;">Off</div>
<div class="t" style="left:301.83px;top:7.06px;font-size:9.64px;color:#e8e8e8;letter-spacing:0.967px;">M..</div>
<div class="t" style="left:442.39px;top:7.11px;font-size:9.22px;color:#e8e8e8;transform:scaleX(0.960);transform-origin:0 0;">Kunal Jai Kaushik</div>
<div class="t" style="left:527.48px;top:7.25px;font-size:8.80px;color:#f3ead8;transform:scaleX(0.883);transform-origin:0 0;">KJ</div>
<div class="t" style="left:17.07px;top:41.84px;font-size:12.29px;color:#e8e8e8;transform:scaleX(0.941);transform-origin:0 0;">File</div>
<div class="t" style="left:58.36px;top:41.89px;font-size:12.15px;color:#e8e8e8;transform:scaleX(0.948);transform-origin:0 0;">Insert</div>
<div class="t" style="left:104.88px;top:41.89px;font-size:12.15px;color:#ffffff;font-weight:bold;transform:scaleX(0.984);transform-origin:0 0;-webkit-text-stroke:0;">Home</div>
<div class="t" style="left:154.60px;top:41.94px;font-size:12.01px;color:#e8e8e8;transform:scaleX(0.932);transform-origin:0 0;">Page Layout</div>
<div class="t" style="left:235.33px;top:41.94px;font-size:12.01px;color:#e8e8e8;transform:scaleX(0.959);transform-origin:0 0;">Formulas</div>
<div class="t" style="left:299.57px;top:41.94px;font-size:12.01px;color:#e8e8e8;transform:scaleX(0.971);transform-origin:0 0;">Data</div>
<div class="t" style="left:340.38px;top:41.94px;font-size:12.01px;color:#e8e8e8;transform:scaleX(0.909);transform-origin:0 0;">Review</div>
<div class="t" style="left:393.75px;top:41.94px;font-size:12.01px;color:#e8e8e8;transform:scaleX(0.936);transform-origin:0 0;">View</div>
<div class="t" style="left:435.32px;top:41.94px;font-size:12.01px;color:#e8e8e8;transform:scaleX(0.965);transform-origin:0 0;">Developer</div>
<div class="t" style="left:506.04px;top:41.94px;font-size:12.01px;color:#e8e8e8;">Help</div>
<div class="t" style="left:547.78px;top:41.94px;font-size:12.01px;color:#e8e8e8;transform:scaleX(0.958);transform-origin:0 0;">Power Pivot</div>
<div class="t" style="left:21.94px;top:98.91px;font-size:9.50px;color:#e8e8e8;letter-spacing:0.254px;">Paste</div>
<div class="t" style="left:25.47px;top:133.10px;font-size:8.66px;color:#e8e8e8;letter-spacing:0.494px;">Clipboard</div>
<div class="t" style="left:109.91px;top:95.76px;font-size:9.92px;color:#e8e8e8;letter-spacing:0.610px;">Font</div>
<div class="t" style="left:152.00px;top:95.72px;font-size:10.06px;color:#e8e8e8;letter-spacing:0.483px;">Alignment</div>
<div class="t" style="left:215.60px;top:95.72px;font-size:10.06px;color:#e8e8e8;letter-spacing:0.514px;">Number</div>
<div class="t" style="left:290.36px;top:68.68px;font-size:11.03px;color:#e8e8e8;transform:scaleX(0.983);transform-origin:0 0;">Conditional Formatting</div>
<div class="t" style="left:290.07px;top:91.45px;font-size:10.96px;color:#e8e8e8;transform:scaleX(0.944);transform-origin:0 0;">Format as Table</div>
<div class="t" style="left:290.41px;top:114.18px;font-size:11.03px;color:#e8e8e8;transform:scaleX(0.888);transform-origin:0 0;">Cell Styles</div>
<div class="t" style="left:330.45px;top:133.96px;font-size:9.92px;color:#e8e8e8;transform:scaleX(0.889);transform-origin:0 0;">Styles</div>
<div class="t" style="left:436.61px;top:95.97px;font-size:10.47px;color:#e8e8e8;transform:scaleX(0.940);transform-origin:0 0;">Cells</div>
<div class="t" style="left:478.56px;top:95.97px;font-size:10.47px;color:#e8e8e8;letter-spacing:0.100px;">Editing</div>
<div class="t" style="left:528.70px;top:97.99px;font-size:10.41px;color:#e8e8e8;letter-spacing:0.289px;">Add-ins</div>
<div class="t" style="left:531.10px;top:133.91px;font-size:9.50px;color:#e8e8e8;transform:scaleX(0.978);transform-origin:0 0;">Add-ins</div>
<div class="t" style="left:583.80px;top:97.52px;font-size:10.34px;color:#e8e8e8;transform:scaleX(0.986);transform-origin:0 0;">Analyze</div>
<div class="t" style="left:590.90px;top:111.57px;font-size:10.47px;color:#e8e8e8;transform:scaleX(0.952);transform-origin:0 0;">Data</div>
<div class="t" style="left:9.67px;top:163.17px;font-size:14.53px;color:#f0f0f0;letter-spacing:0.660px;-webkit-text-stroke:0;">G11</div>
<div class="t" style="left:104.23px;top:511.50px;font-size:12.99px;color:#f0f0f0;transform:scaleX(0.910);transform-origin:0 0;">Sheet3</div>
<div class="t" style="left:165.03px;top:511.50px;font-size:12.99px;color:#f0f0f0;transform:scaleX(0.910);transform-origin:0 0;">Sheet4</div>
<div class="t" style="left:224.52px;top:508.30px;font-size:12.99px;color:#1e1e1e;transform:scaleX(0.933);transform-origin:0 0;">Sheet5</div>
<div class="t" style="left:284.82px;top:511.60px;font-size:12.99px;color:#f0f0f0;transform:scaleX(0.926);transform-origin:0 0;">Sheet6</div>
<div class="t" style="left:8.50px;top:535.35px;font-size:9.08px;color:#e0e0e0;transform:scaleX(0.968);transform-origin:0 0;">Ready</div>
<div class="t" style="left:94.01px;top:534.96px;font-size:9.36px;color:#e8e8e8;font-weight:bold;transform:scaleX(0.992);transform-origin:0 0;-webkit-text-stroke:0;">Accessibility: Investigate</div>
<div class="t" style="left:680.35px;top:535.01px;font-size:9.22px;color:#e8e8e8;letter-spacing:0.113px;">100%</div>
</body></html>
